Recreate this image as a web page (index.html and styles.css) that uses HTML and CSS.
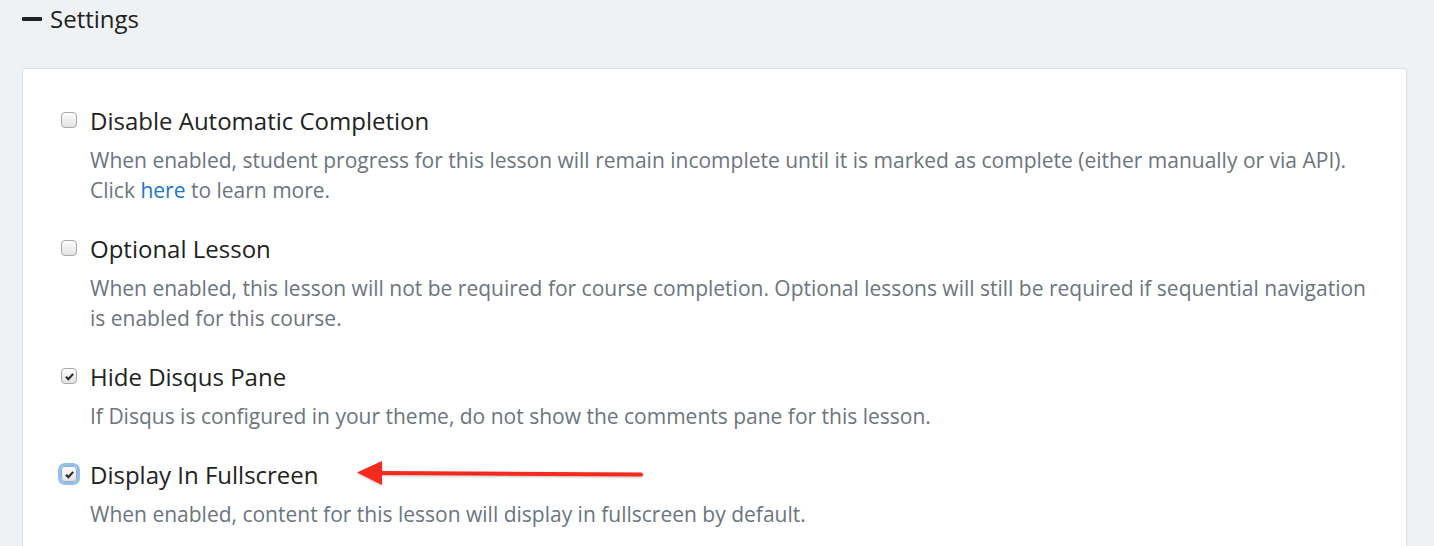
FILE: index.html
```html
<!DOCTYPE html>
<html>
<head>
<meta charset="utf-8">
<link rel="stylesheet" href="styles.css">
</head>
<body>
<div class="page">
  <h2 class="section-title"><span class="collapse-bar"></span>Settings</h2>
  <div class="card">
    <div class="option">
      <label class="option-label"><span class="checkbox"></span>Disable Automatic Completion</label>
      <p class="option-help">When enabled, student progress for this lesson will remain incomplete until it is marked as complete (either manually or via API). Click <a href="#" class="link">here</a> to learn more.</p>
    </div>
    <div class="option">
      <label class="option-label"><span class="checkbox"></span>Optional Lesson</label>
      <p class="option-help">When enabled, this lesson will not be required for course completion. Optional lessons will still be required if sequential navigation is enabled for this course.</p>
    </div>
    <div class="option">
      <label class="option-label"><span class="checkbox checked"><svg viewBox="0 0 10 10" class="tick"><path d="M1.8 5.2 L4 7.4 L8.3 2.6" /></svg></span>Hide Disqus Pane</label>
      <p class="option-help">If Disqus is configured in your theme, do not show the comments pane for this lesson.</p>
    </div>
    <div class="option">
      <label class="option-label"><span class="checkbox checked focused"><svg viewBox="0 0 10 10" class="tick"><path d="M1.8 5.2 L4 7.4 L8.3 2.6" /></svg></span>Display In Fullscreen</label>
      <p class="option-help">When enabled, content for this lesson will display in fullscreen by default.</p>
      <svg class="arrow" viewBox="0 0 300 30" width="300" height="30">
        <defs>
          <filter id="sh" x="-10%" y="-50%" width="120%" height="200%">
            <feDropShadow dx="0" dy="1" stdDeviation="1" flood-color="#000" flood-opacity="0.25"/>
          </filter>
        </defs>
        <g filter="url(#sh)">
          <line x1="22" y1="14" x2="284" y2="15.5" stroke="#f42a1f" stroke-width="4" stroke-linecap="round"/>
          <polygon points="0,13.5 25,2 25,26" fill="#f42a1f"/>
        </g>
      </svg>
    </div>
  </div>
</div>
</body>
</html>
```

FILE: styles.css
```css
html, body {
  margin: 0;
  padding: 0;
  background: #eff2f5;
  font-family: "Open Sans", "Noto Sans", sans-serif;
  overflow: hidden;
}

.page {
  padding: 0 27px 0 22px;
}

.section-title {
  display: flex;
  align-items: center;
  gap: 8px;
  margin: 0;
  height: 37px;
  font-size: 24px;
  font-weight: 400;
  color: #222;
}

.collapse-bar {
  display: inline-block;
  width: 20px;
  height: 4px;
  background: #222;
  border-radius: 1px;
}

.card {
  margin-top: 31px;
  background: #fff;
  border: 1px solid #dcdfe2;
  border-radius: 3px;
  padding: 36px 38px 0 38px;
  min-height: 600px;
}

.option {
  position: relative;
  margin-bottom: 28px;
}

.option-label {
  display: flex;
  align-items: center;
  height: 30px;
  font-size: 24px;
  color: #222;
}

.checkbox {
  box-sizing: border-box;
  width: 16px;
  height: 16px;
  margin-right: 13px;
  border: 1px solid #a9a9a9;
  border-radius: 4px;
  background: linear-gradient(#fdfdfd, #e2e2e2);
  display: flex;
  align-items: center;
  justify-content: center;
}

.checkbox.focused {
  box-shadow: 0 0 0 3px #8ec0f7;
}

.tick {
  width: 11px;
  height: 11px;
  fill: none;
  stroke: #2b2b2b;
  stroke-width: 2;
}

.option-help {
  margin: 10px 0 0 29px;
  font-size: 21px;
  line-height: 30px;
  color: #6b7580;
}

.link {
  color: #1a75d2;
  text-decoration: none;
}

.arrow {
  position: absolute;
  left: 296px;
  top: 0;
}
```
